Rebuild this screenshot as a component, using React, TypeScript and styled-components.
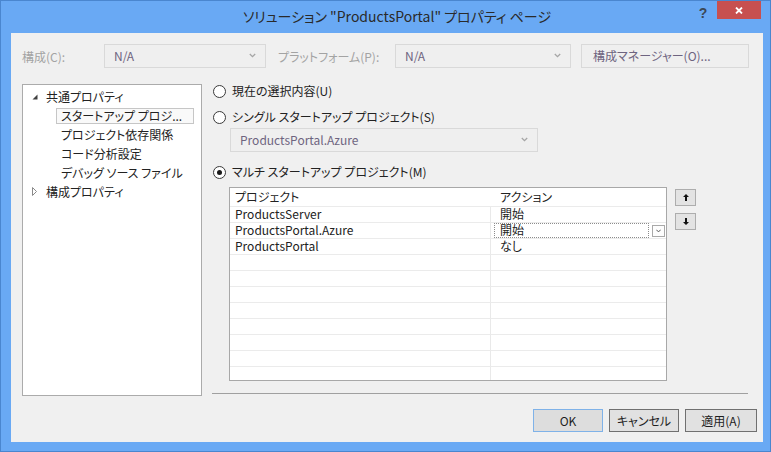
import React from 'react';
import styled, { createGlobalStyle, css } from 'styled-components';

const Global = createGlobalStyle`
  html, body { margin: 0; padding: 0; background: #69a9f4; }
  body {
    font-family: "Noto Sans CJK JP", "Noto Sans", sans-serif;
    font-size: 12px;
    color: #222222;
    font-feature-settings: "palt";
  }
  * { box-sizing: border-box; }
`;

const Window = styled.div`
  width: 771px;
  height: 452px;
  background: #69a9f4;
  border: 1px solid #4a86cf;
  display: flex;
  flex-direction: column;
`;

const TitleBar = styled.div`
  height: 32px;
  flex-shrink: 0;
  display: flex;
  align-items: flex-start;
`;

const Title = styled.div`
  flex: 1;
  text-align: center;
  padding-left: 98px;
  font-size: 14px;
  line-height: 31px;
  color: #2a2a2a;
  white-space: nowrap;
`;

const HelpButton = styled.div`
  width: 16px;
  height: 22px;
  margin-right: 6px;
  text-align: center;
  font-family: "Liberation Sans", sans-serif;
  font-weight: bold;
  font-size: 14px;
  line-height: 24px;
  color: #3b4756;
`;

const CloseButton = styled.div`
  width: 44px;
  height: 18px;
  margin-right: 9px;
  background: #c75050;
  display: flex;
  align-items: center;
  justify-content: center;
`;

const Content = styled.div`
  flex: 1;
  margin: 0 7px 9px 10px;
  background: #f0f0f0;
  padding: 11px 14px 0 11px;
  display: flex;
  flex-direction: column;
`;

const TopRow = styled.div`
  display: flex;
  align-items: center;
  height: 24px;
`;

const FieldLabel = styled.div<{ $w: number; $ml?: number }>`
  width: ${(p) => p.$w}px;
  margin-left: ${(p) => p.$ml ?? 0}px;
  color: #a3a3a3;
  white-space: nowrap;
`;

const Combo = styled.div<{ $w: number; $ml?: number; $mt?: number }>`
  width: ${(p) => p.$w}px;
  margin-left: ${(p) => p.$ml ?? 0}px;
  margin-top: ${(p) => p.$mt ?? 0}px;
  height: 24px;
  flex-shrink: 0;
  border: 1px solid #d9d9d9;
  background: #efefef;
  display: flex;
  align-items: center;
  justify-content: space-between;
  padding: 0 9px 1px 9px;
  color: #6e6480;
`;

const ManagerButton = styled.div`
  width: 168px;
  height: 24px;
  margin-left: 10px;
  border: 1px solid #d9d9d9;
  background: #efefef;
  color: #6e6480;
  display: flex;
  align-items: center;
  padding: 0 0 1px 11px;
  white-space: nowrap;
`;

const MainRow = styled.div`
  display: flex;
  margin-top: 16px;
  height: 312px;
`;

const Tree = styled.div`
  width: 180px;
  height: 312px;
  background: #fff;
  border: 1px solid #ababab;
  padding-top: 4px;
  display: flex;
  flex-direction: column;
  gap: 3px;
`;

const TreeRow = styled.div<{ $level: number; $selected?: boolean }>`
  height: 16px;
  display: flex;
  align-items: center;
  white-space: nowrap;
  border: 1px solid transparent;
  padding-bottom: 1px;
  ${(p) =>
    p.$level === 0
      ? css`
          padding-left: 8px;
        `
      : css`
          margin-left: 33px;
          width: 138px;
          padding-left: 4px;
        `}
  ${(p) =>
    p.$selected &&
    css`
      border-color: #c6c6c6;
      background: #f9f9f9;
    `}
`;

const Expander = styled.span`
  width: 14px;
  display: inline-flex;
  align-items: center;
`;

const RightPane = styled.div`
  width: 536px;
  margin-left: 10px;
  display: flex;
  flex-direction: column;
`;

const RadioRow = styled.div<{ $mt: number }>`
  height: 15px;
  margin-top: ${(p) => p.$mt}px;
  display: flex;
  align-items: center;
  gap: 6px;
  white-space: nowrap;
`;

const RadioText = styled.span`
  margin-top: -2px;
`;

const Radio = styled.span<{ $checked?: boolean }>`
  width: 13px;
  height: 13px;
  margin-left: 1px;
  border-radius: 50%;
  border: 1px solid #3a3a3a;
  background: #fff;
  display: inline-flex;
  align-items: center;
  justify-content: center;
  &::after {
    content: '';
    width: 5px;
    height: 5px;
    border-radius: 50%;
    background: ${(p) => (p.$checked ? '#1a1a1a' : 'transparent')};
  }
`;

const GridArea = styled.div`
  display: flex;
  margin-top: 7px;
  margin-left: 17px;
`;

const Table = styled.div`
  width: 438px;
  height: 194px;
  border: 1px solid #a8a8a8;
  background: #fff;
  overflow: hidden;
  display: grid;
  grid-template-columns: 261px 1fr;
  grid-auto-rows: 16px;
  grid-template-rows: 19px;
`;

const Cell = styled.div<{ $col: number; $header?: boolean }>`
  display: flex;
  align-items: center;
  white-space: nowrap;
  border-bottom: 1px solid #ebebeb;
  border-right: ${(p) => (p.$col === 0 && !p.$header ? '1px solid #e9e9e9' : 'none')};
  padding-left: ${(p) => (p.$col === 0 ? 5 : 9)}px;
  padding-bottom: ${(p) => (p.$header ? 1 : 3)}px;
  line-height: 13px;
`;

const EditCell = styled.div`
  display: flex;
  align-items: center;
  border-bottom: 1px solid #ebebeb;
  padding-left: 3px;
`;

const FocusBox = styled.div`
  width: 155px;
  height: 15px;
  border: 1px dotted #8c8c8c;
  padding: 0 0 2px 5px;
  display: flex;
  align-items: center;
  line-height: 12px;
`;

const DropButton = styled.div`
  width: 13px;
  height: 12px;
  margin-left: 3px;
  border: 1px solid #a9a9a9;
  background: #fdfdfd;
  display: flex;
  align-items: center;
  justify-content: center;
`;

const ArrowColumn = styled.div`
  display: flex;
  flex-direction: column;
  gap: 7px;
  margin-left: 8px;
  padding-top: 2px;
`;

const ArrowButton = styled.div`
  width: 21px;
  height: 17px;
  border: 1px solid #adadad;
  background: #e3e3e3;
  display: flex;
  align-items: center;
  justify-content: center;
`;

const Separator = styled.div`
  margin-top: auto;
  margin-bottom: 2px;
  height: 1px;
  background: #a0a0a0;
`;

const Footer = styled.div`
  display: flex;
  justify-content: flex-end;
  gap: 6px;
  margin-top: 13px;
  margin-right: -8px;
`;

const DialogButton = styled.div<{ $w: number; $default?: boolean }>`
  width: ${(p) => p.$w}px;
  height: 23px;
  display: flex;
  align-items: center;
  justify-content: center;
  padding-bottom: 1px;
  background: ${(p) => (p.$default ? '#dddddd' : '#e1e1e1')};
  border: 1px solid ${(p) => (p.$default ? '#7fb2e8' : '#707070')};
  color: #1e1e1e;
`;

const Chevron = ({ color = '#a5a5a5' }: { color?: string }) => (
  <svg width="7" height="5" viewBox="0 0 7 5">
    <path d="M0.8 1 L3.5 3.7 L6.2 1" fill="none" stroke={color} strokeWidth="1.3" />
  </svg>
);

const SmallChevron = () => (
  <svg width="5" height="4" viewBox="0 0 5 4">
    <path d="M0.3 0.7 L2.5 2.9 L4.7 0.7" fill="none" stroke="#555" strokeWidth="1" />
  </svg>
);

const UpArrow = () => (
  <svg width="6" height="7" viewBox="0 0 6 7">
    <path d="M3 0 L6 3 H4 V7 H2 V3 H0 Z" fill="#111" />
  </svg>
);

const DownArrow = () => (
  <svg width="6" height="7" viewBox="0 0 6 7">
    <path d="M3 7 L6 4 H4 V0 H2 V4 H0 Z" fill="#111" />
  </svg>
);

const ExpandedIcon = () => (
  <svg width="6" height="6" viewBox="0 0 6 6">
    <path d="M5.5 0.5 V5.5 H0.5 Z" fill="#404040" />
  </svg>
);

const CollapsedIcon = () => (
  <svg width="5" height="9" viewBox="0 0 5 9">
    <path d="M0.5 0.5 L4.5 4.5 L0.5 8.5 Z" fill="none" stroke="#8a8a8a" strokeWidth="1" />
  </svg>
);

const CloseIcon = () => (
  <svg width="8" height="7" viewBox="0 0 8 7">
    <path d="M1 0.5 L7 6.5 M7 0.5 L1 6.5" stroke="#fff" strokeWidth="1.8" />
  </svg>
);

const rows: Array<[string, string]> = [
  ['ProductsServer', '開始'],
  ['ProductsPortal.Azure', '開始'],
  ['ProductsPortal', 'なし'],
];

export default function App() {
  const empty = Array.from({ length: 8 });
  return (
    <>
      <Global />
      <Window>
        <TitleBar>
          <Title>ソリューション "ProductsPortal" プロパティ ページ</Title>
          <HelpButton>?</HelpButton>
          <CloseButton>
            <CloseIcon />
          </CloseButton>
        </TitleBar>
        <Content>
          <TopRow>
            <FieldLabel $w={82}>構成(C):</FieldLabel>
            <Combo $w={162}>
              <span>N/A</span>
              <Chevron />
            </Combo>
            <FieldLabel $w={117} $ml={12}>
              プラットフォーム(P):
            </FieldLabel>
            <Combo $w={176}>
              <span>N/A</span>
              <Chevron />
            </Combo>
            <ManagerButton>構成マネージャー(O)...</ManagerButton>
          </TopRow>
          <MainRow>
            <Tree>
              <TreeRow $level={0}>
                <Expander>
                  <ExpandedIcon />
                </Expander>
                共通プロパティ
              </TreeRow>
              <TreeRow $level={1} $selected>
                スタートアップ プロジ...
              </TreeRow>
              <TreeRow $level={1}>プロジェクト依存関係</TreeRow>
              <TreeRow $level={1}>コード分析設定</TreeRow>
              <TreeRow $level={1}>デバッグ ソース ファイル</TreeRow>
              <TreeRow $level={0}>
                <Expander>
                  <CollapsedIcon />
                </Expander>
                構成プロパティ
              </TreeRow>
            </Tree>
            <RightPane>
              <RadioRow $mt={0}>
                <Radio />
                <RadioText>現在の選択内容(U)</RadioText>
              </RadioRow>
              <RadioRow $mt={11}>
                <Radio />
                <RadioText>シングル スタートアップ プロジェクト(S)</RadioText>
              </RadioRow>
              <Combo $w={308} $ml={18} $mt={3}>
                <span>ProductsPortal.Azure</span>
                <Chevron />
              </Combo>
              <RadioRow $mt={13}>
                <Radio $checked />
                <RadioText>マルチ スタートアップ プロジェクト(M)</RadioText>
              </RadioRow>
              <GridArea>
                <Table>
                  <Cell $col={0} $header>
                    プロジェクト
                  </Cell>
                  <Cell $col={1} $header>
                    アクション
                  </Cell>
                  {rows.map(([name, action], i) => (
                    <React.Fragment key={name}>
                      <Cell $col={0}>{name}</Cell>
                      {i === 1 ? (
                        <EditCell>
                          <FocusBox>{action}</FocusBox>
                          <DropButton>
                            <SmallChevron />
                          </DropButton>
                        </EditCell>
                      ) : (
                        <Cell $col={1}>{action}</Cell>
                      )}
                    </React.Fragment>
                  ))}
                  {empty.map((_, i) => (
                    <React.Fragment key={i}>
                      <Cell $col={0} />
                      <Cell $col={1} />
                    </React.Fragment>
                  ))}
                </Table>
                <ArrowColumn>
                  <ArrowButton>
                    <UpArrow />
                  </ArrowButton>
                  <ArrowButton>
                    <DownArrow />
                  </ArrowButton>
                </ArrowColumn>
              </GridArea>
              <Separator />
            </RightPane>
          </MainRow>
          <Footer>
            <DialogButton $w={70} $default>
              OK
            </DialogButton>
            <DialogButton $w={70}>キャンセル</DialogButton>
            <DialogButton $w={72}>適用(A)</DialogButton>
          </Footer>
        </Content>
      </Window>
    </>
  );
}
